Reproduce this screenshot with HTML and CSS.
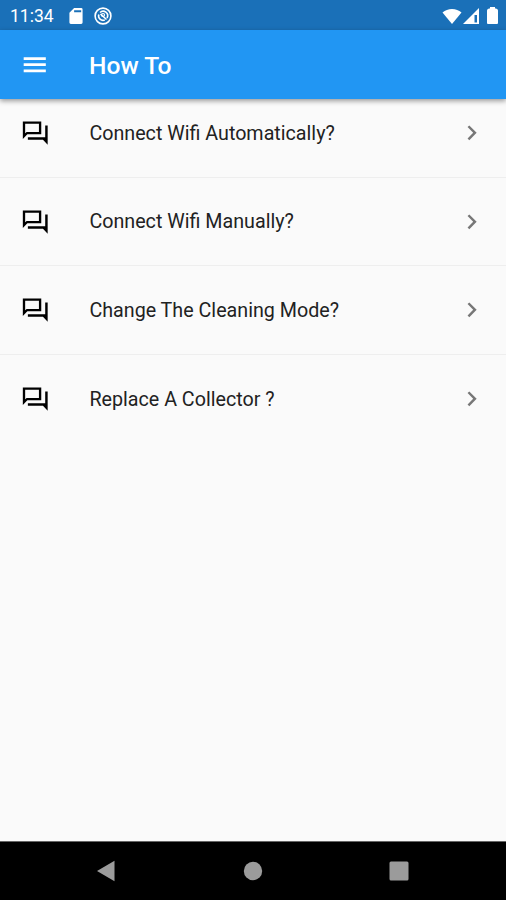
FILE: index.html
```html
<!DOCTYPE html>
<html lang="en">
<head>
    <meta charset="UTF-8">
    <meta name="viewport" content="width=device-width, initial-scale=1.0">
    <title>How To</title>
    <link rel="stylesheet" href="styles.css">
</head>
<body>
    <svg width="0" height="0" class="symbols">
        <symbol id="forum" viewBox="0 0 24 24">
            <path fill-rule="evenodd" d="M2.300 2.800h15v10.400H6L2.300 17zM4.200 4.700v7.800l1.200-1.200h10V4.700zM20.500 6h2v15.800l-3.800-4.100H6.400v-2.100h14.100z"/>
        </symbol>
        <symbol id="chevron" viewBox="0 0 24 24">
            <path d="M10 6L8.59 7.41 13.17 12l-4.58 4.59L10 18l6-6z"/>
        </symbol>
    </svg>
    <div class="status-bar">
        <span class="clock">11:34</span>
        <svg class="sd-card" viewBox="0 0 14 17"><path fill="#fff" fill-rule="evenodd" d="M5 0h7.500q1.500 0 1.500 1.500v14q0 1.500-1.500 1.500h-11Q0 17 0 15.500V5zM5 2.500v2h7.500v-2z"/></svg>
        <svg class="sync" viewBox="0 0 18 18" fill="none" stroke="#fff"><circle cx="9" cy="9" r="7.900" stroke-width="1.600"/><path stroke-width="1.600" d="M4.800 7.500a4.500 4.500 0 0 0 6 5.500M6 5.500a4.500 4.500 0 0 1 7 5.500M6.500 7l6 5.500"/><circle cx="9" cy="8" r="1.500" stroke-width="1.200"/></svg>
        <div class="signals">
            <svg class="wifi" viewBox="0 0 20 16"><path fill="#fff" d="M10 16L.5 4.500Q4.500 1 10 1t9.500 3.500z"/></svg>
            <svg class="cell" viewBox="0 0 16 16"><path fill="#fff" fill-rule="evenodd" d="M0 16L16 0v16zM11.500 7v7.500H14V7z"/></svg>
            <svg class="battery" viewBox="0 0 11 17"><path fill="#fff" d="M3 0h5v1.500h1q2 .5 2 2V16q0 1-1 1H1q-1 0-1-1V3.500q0-1.500 2-2h1z"/></svg>
        </div>
    </div>
    <header class="app-bar">
        <svg class="icon" viewBox="0 0 24 24" fill="#fff"><path d="M3 18.100h18v-2.300H3v2.300zm0-5h18v-2.300H3v2.300zm0-7.300v2.300h18V5.800H3z"/></svg>
        <h1>How To</h1>
    </header>
    <main class="list">
        <div class="item">
            <svg class="icon"><use href="#forum"/></svg>
            <span class="label">Connect Wifi Automatically?</span>
            <svg class="icon arrow"><use href="#chevron"/></svg>
        </div>
        <div class="item">
            <svg class="icon"><use href="#forum"/></svg>
            <span class="label">Connect Wifi Manually?</span>
            <svg class="icon arrow"><use href="#chevron"/></svg>
        </div>
        <div class="item">
            <svg class="icon"><use href="#forum"/></svg>
            <span class="label">Change The Cleaning Mode?</span>
            <svg class="icon arrow"><use href="#chevron"/></svg>
        </div>
        <div class="item">
            <svg class="icon"><use href="#forum"/></svg>
            <span class="label">Replace A Collector ?</span>
            <svg class="icon arrow"><use href="#chevron"/></svg>
        </div>
    </main>
    <nav class="nav-bar">
        <svg viewBox="0 0 22 22"><path d="M2 11L19.500 .8v20.400z"/></svg>
        <svg viewBox="0 0 22 22"><circle cx="11" cy="11" r="9.200"/></svg>
        <svg viewBox="0 0 22 22"><rect x="1.500" y="1.500" width="19" height="19" rx="1.500"/></svg>
    </nav>
</body>
</html>
```

FILE: styles.css
```css
* {
    box-sizing: border-box;
}
body {
    margin: 0;
    height: 900px;
    display: flex;
    flex-direction: column;
    overflow: hidden;
    background: #fafafa;
    font-family: Roboto, sans-serif;
}
.symbols {
    position: absolute;
}
.icon {
    width: 29.5px;
    height: 29.5px;
    flex: none;
}
.status-bar {
    height: 30px;
    flex: none;
    display: flex;
    align-items: center;
    padding: 1px 8px 0 10px;
    background: #1a70b8;
    color: white;
}
.clock {
    width: 59px;
    font-size: 17.5px;
}
.sd-card {
    width: 14px;
    height: 16px;
}
.sync {
    width: 18px;
    height: 18px;
    margin-left: 11px;
}
.signals {
    margin-left: auto;
    display: flex;
    align-items: center;
}
.wifi {
    width: 20px;
    height: 16px;
}
.cell {
    width: 16px;
    height: 16px;
    margin-left: 1px;
}
.battery {
    width: 11px;
    height: 17px;
    margin-left: 8px;
}
.app-bar {
    height: 69px;
    flex: none;
    display: flex;
    align-items: center;
    gap: 39.5px;
    padding: 1px 0 0 20px;
    background: #2196f3;
    color: white;
    box-shadow: 0 2px 5px rgba(0, 0, 0, .4);
    z-index: 1;
}
h1 {
    margin: 0;
    font-size: 24.6px;
    font-weight: 500;
}
/* the list is scrolled slightly under the app bar */
.list {
    flex: 1;
    margin-top: -10px;
}
.item {
    height: 88.6px;
    display: flex;
    align-items: center;
    padding: 0 19.5px 0 19.5px;
    border-bottom: 1px solid #eee;
}
.item:last-child {
    border-bottom: 0;
}
.label {
    flex: 1;
    margin-left: 40.4px;
    padding-top: 1px;
    font-size: 19.7px;
    color: #222;
}
.arrow {
    fill: #777;
}
.nav-bar {
    height: 59px;
    flex: none;
    display: flex;
    justify-content: space-between;
    align-items: center;
    padding: 0 96px 0 95px;
    border-top: 1px solid #666;
    background: black;
}
.nav-bar svg {
    width: 22px;
    height: 22px;
    fill: #9b9b9b;
}
```
